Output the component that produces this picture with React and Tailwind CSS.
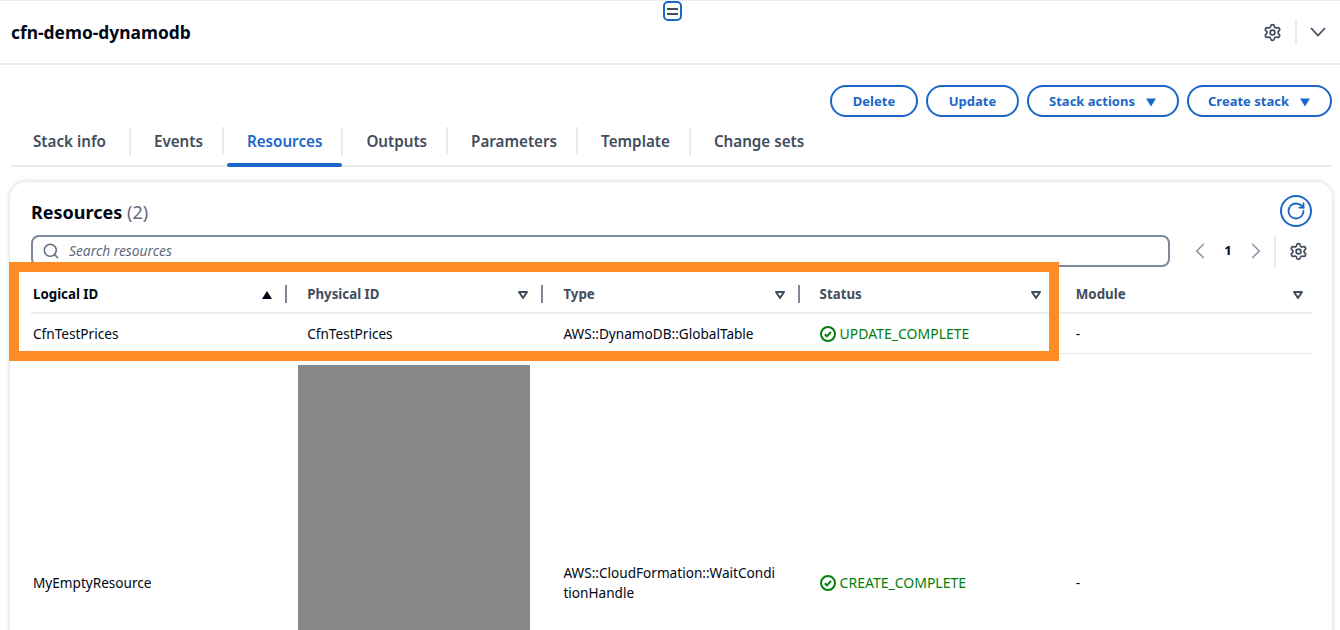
import { ChevronLeft, ChevronRight, RotateCw, Search, Settings } from 'lucide-react';

const TABS = ['Stack info', 'Events', 'Resources', 'Outputs', 'Parameters', 'Template', 'Change sets'];
const COLUMNS = ['Logical ID', 'Physical ID', 'Type', 'Status', 'Module'];

const Caret = ({ variant }) => (
    <svg width="12" height="12" viewBox="0 0 12 12" className="shrink-0">
        {variant === 'up' && <path d="M6 2l5 8H1z" fill="currentColor" />}
        {variant === 'down' && <path d="M1 2.5h10L6 10.5z" fill="currentColor" />}
        {variant === 'outline' && <path d="M2 3h8L6 9z" fill="none" stroke="currentColor" strokeWidth="2" strokeLinejoin="round" />}
    </svg>
);

const StatusOk = ({ label }) => (
    <span className="flex items-center gap-1 text-sm text-[#037f0c]">
        <svg width="16" height="16" viewBox="0 0 16 16" fill="none" stroke="currentColor" strokeWidth="2" className="shrink-0">
            <circle cx="8" cy="8" r="7" />
            <path d="M4.8 8.2l2.2 2.2 4-4.6" />
        </svg>
        {label}
    </span>
);

const ActionButton = ({ label, caret, width }) => (
    <button className={`${width} h-8 pt-px rounded-full border-2 border-[#1b66c9] text-[#1b66c9] text-[13px] font-bold flex items-center justify-center ${caret ? 'gap-[10px]' : ''}`}>
        {label}
        {caret && <Caret variant="down" />}
    </button>
);

export default function App() {
    return (
        <div className="relative h-[630px] overflow-hidden bg-white text-[13.6px] text-[#000716] font-['Noto_Sans','Open_Sans',sans-serif]">
            {/* Collapse handle over the header */}
            <div className="absolute left-[663px] top-[1px] w-[19px] h-[20px] rounded-[5px] border-2 border-[#1b66c9] flex flex-col items-center justify-center gap-[3px]">
                <span className="w-[11px] h-[2px] bg-[#414d5c]" />
                <span className="w-[11px] h-[2px] bg-[#414d5c]" />
            </div>

            {/* Stack header */}
            <header className="h-[65px] border-t border-t-[#e9ebed] border-b-2 border-b-[#e9ebed] flex items-center justify-between pl-[11px] pr-[14px]">
                <h1 className="text-[17.4px] font-bold">cfn-demo-dynamodb</h1>
                <div className="flex items-center text-[#414d5c]">
                    <Settings size={19} strokeWidth={2.2} />
                    <span className="w-[2px] h-6 bg-[#e9ebed] ml-[13px] mr-[13px]" />
                    <svg width="16" height="10" viewBox="0 0 16 10" fill="none" stroke="currentColor" strokeWidth="1.8">
                        <path d="M1 1l7 7.5L15 1" />
                    </svg>
                </div>
            </header>

            {/* Actions */}
            <div className="flex justify-end gap-2 pr-2 pt-5">
                <ActionButton label="Delete" width="w-[88px]" />
                <ActionButton label="Update" width="w-[93px]" />
                <ActionButton label="Stack actions" caret width="w-[152px]" />
                <ActionButton label="Create stack" caret width="w-[145px]" />
            </div>

            {/* Tabs */}
            <nav className="ml-[11px] mr-2 h-[50px] border-b-2 border-[#e9ebed] flex items-center">
                {TABS.map((tab, i) => (
                    <div key={tab} className={`relative h-full pt-px flex items-center ${i === 0 ? 'pl-[22px] pr-[25px]' : 'pl-[23px] pr-[21px]'} ${i < TABS.length - 1 ? 'after:absolute after:right-0 after:top-[10px] after:h-7 after:w-[2px] after:bg-[#e9ebed]' : ''}`}>
                        <span className={`text-[15.2px] font-semibold ${tab === 'Resources' ? 'text-[#1b66c9]' : 'text-[#414d5c]'}`}>{tab}</span>
                        {tab === 'Resources' && <span className="absolute left-[3px] right-[1px] -bottom-[2px] h-[4px] rounded-sm bg-[#1b66c9]" />}
                    </div>
                ))}
            </nav>

            {/* Resources card */}
            <section className="ml-[10px] mr-2 mt-[15px] rounded-t-2xl bg-white shadow-[0_0_4px_1px_rgba(0,7,22,0.14)] pl-[21px] pr-5 pt-[13px]">
                <div className="flex items-start justify-between">
                    <h2 className="h-8 text-lg font-bold leading-[34px]">Resources <span className="font-normal text-[#5f6b7a]">(2)</span></h2>
                    <button className="w-8 h-8 rounded-full border-2 border-[#1b66c9] text-[#1b66c9] flex items-center justify-center">
                        <RotateCw size={20} strokeWidth={2.2} />
                    </button>
                </div>

                <div className="flex items-center mt-2 h-8">
                    <div className="w-[1139px] h-8 rounded-lg border-2 border-[#7d8998] flex items-center gap-[9px] pl-[9px]">
                        <Search size={18} strokeWidth={2} className="text-[#5f6b7a]" />
                        <span className="pt-px italic text-[13.8px] text-[#5f6b7a]">Search resources</span>
                    </div>
                    <div className="flex items-center ml-[17px] text-[#8d99a8]">
                        <ChevronLeft size={26} strokeWidth={1.6} />
                        <span className="w-[30px] text-center text-[13px] font-bold text-[#000716]">1</span>
                        <ChevronRight size={26} strokeWidth={1.6} />
                        <span className="w-[2px] h-8 bg-[#e9ebed] ml-[5px]" />
                        <Settings size={19} strokeWidth={2.2} className="ml-[13px] text-[#414d5c]" />
                    </div>
                </div>

                {/* Table */}
                <div className="mt-2 w-[1281px]">
                    <div className="grid grid-cols-5 h-[39px] border-b-2 border-[#e9ebed] items-center text-[13.3px] font-bold text-[#414d5c]">
                        {COLUMNS.map((col, i) => (
                            <div key={col} className={`relative flex items-center justify-between h-full pt-[2px] ${i === 0 ? 'pl-[2px] text-[#000716]' : 'pl-5'} ${i === 4 ? 'pr-2' : 'pr-[14px]'}`}>
                                {col}
                                <Caret variant={i === 0 ? 'up' : 'outline'} />
                                {i < 4 && <span className="absolute right-0 top-[10px] h-[18px] w-[2px] bg-[#7d8998]" />}
                            </div>
                        ))}
                    </div>
                    <div className="grid grid-cols-5 h-[40px] border-b border-[#e9ebed] items-center">
                        <div className="pl-[2px] pt-[2px]">CfnTestPrices</div>
                        <div className="pl-5 pt-[2px]">CfnTestPrices</div>
                        <div className="pl-5 pt-[2px]">AWS::DynamoDB::GlobalTable</div>
                        <div className="pl-5"><StatusOk label="UPDATE_COMPLETE" /></div>
                        <div className="pl-5 pt-[2px]">-</div>
                    </div>
                    <div className="grid grid-cols-5 h-[458px] items-center">
                        <div className="pl-[2px]">MyEmptyResource</div>
                        <div className="pl-[11px]"><div className="w-[232px] h-[436px] bg-[#878787]" /></div>
                        <div className="pl-5 pr-5 break-all leading-5">AWS::CloudFormation::WaitConditionHandle</div>
                        <div className="pl-5"><StatusOk label="CREATE_COMPLETE" /></div>
                        <div className="pl-5">-</div>
                    </div>
                </div>
            </section>

            {/* Annotation frame */}
            <div className="absolute left-[9px] top-[262px] w-[1050px] h-[99px] border-[10px] border-[#ff8c24] pointer-events-none" />
        </div>
    );
}
